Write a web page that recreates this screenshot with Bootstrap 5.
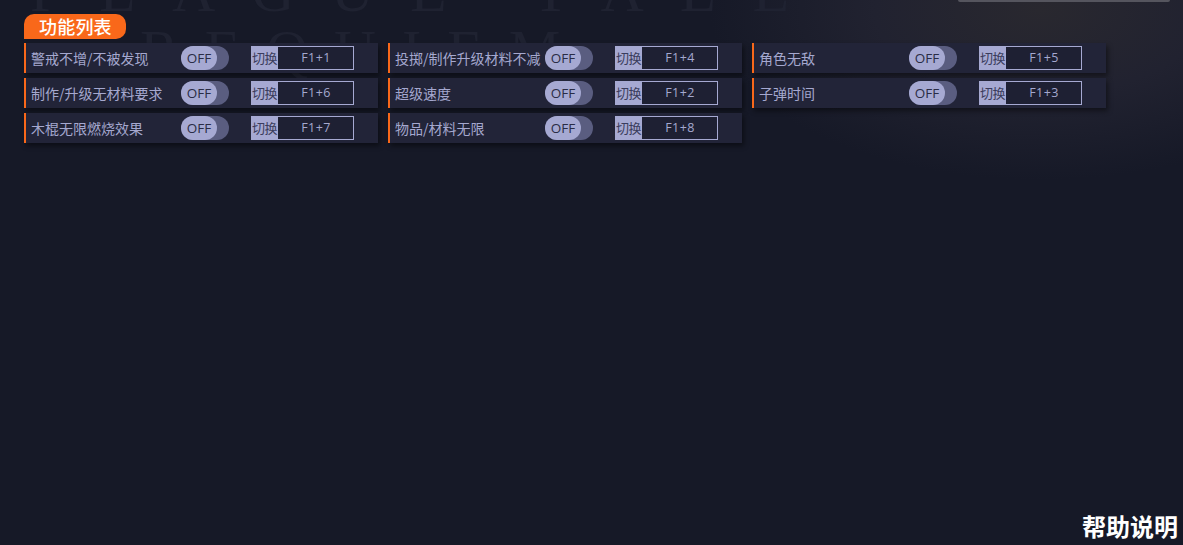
<!DOCTYPE html>
<html lang="zh">
<head>
<meta charset="utf-8">
<title>功能列表</title>
<link href="https://cdn.jsdelivr.net/npm/bootstrap@5.3.0/dist/css/bootstrap.min.css" rel="stylesheet">
<style>
html,body{height:545px;overflow:hidden}
body{background:#161927;font-family:"Noto Sans CJK SC","Open Sans",sans-serif;color:#a5a8cf;position:relative}
.stage{height:545px;padding:14px 0 0 24px;position:relative;
 background:radial-gradient(ellipse 330px 170px at 1040px 10px,#29282f 0,#212230 50%,rgba(22,25,39,0) 100%)}
.art{position:absolute;left:0;top:0;width:1183px;height:130px;pointer-events:none}
.art text{font-family:"Liberation Serif",serif;fill:#1f2231}
.scroll-edge{position:absolute;left:958px;top:0;width:212px;height:2px;border-radius:0 0 6px 6px;background:#55555e}
.head-pill{width:102px;height:25px;background:#f9681a;color:#fff;border-radius:10px 10px 10px 0;font-size:18px;font-weight:500;letter-spacing:.2px;line-height:25px;padding-left:15px;margin-bottom:4px;position:relative}
.rows{display:grid;grid-template-columns:repeat(3,354px);column-gap:10px;row-gap:5px;position:relative}
.item{height:30px;background:#222438;border-left:2px solid #f9681a;box-shadow:2px 3px 5px rgba(0,0,0,.45);display:flex;align-items:center;position:relative}
.lbl{width:155px;padding-left:5px;font-size:14px;line-height:30px;white-space:nowrap;flex:none;color:#a5a8cf}
.tgl{width:48px;height:24px;border-radius:12px;background:#5a5d80;flex:none}
.knob{width:36px;height:24px;border-radius:12px;background:#a6a9d2;color:#2a2c45;font-size:13.5px;line-height:24px;text-align:center;font-family:"Open Sans",sans-serif}
.hk{display:flex;height:24px;width:103px;margin-left:22px;border:1px solid #a6a9d2;flex:none}
.hk-a{width:27px;background:#a6a9d2;color:#3a3c5c;font-size:13px;line-height:22px;text-align:center;white-space:nowrap;flex:none;margin-left:-1px;letter-spacing:-.5px}
.hk-b{flex:1;text-align:center;font-size:12.5px;line-height:22px;color:#a5a8cf;font-family:"Open Sans",sans-serif;letter-spacing:.4px;padding-left:1px;background:#1e2033}
.help{position:absolute;right:5px;bottom:4px;color:#fff;font-size:24px;font-weight:700;line-height:30px}
</style>
</head>
<body>
<div class="stage">
<svg class="art" viewBox="0 0 1183 130" aria-hidden="true">
<text x="30" y="11" font-size="60" letter-spacing="36">PLAGUE TALE</text>
<text x="140" y="70" font-size="58" letter-spacing="26">REQUIEM</text>
</svg>
<div class="scroll-edge"></div>
<div class="head-pill">功能列表</div>
<div class="rows">
<div class="item"><div class="lbl">警戒不增/不被发现</div><div class="tgl"><div class="knob">OFF</div></div><div class="hk"><div class="hk-a">切换</div><div class="hk-b">F1+1</div></div></div>
<div class="item"><div class="lbl">投掷/制作升级材料不减</div><div class="tgl"><div class="knob">OFF</div></div><div class="hk"><div class="hk-a">切换</div><div class="hk-b">F1+4</div></div></div>
<div class="item"><div class="lbl">角色无敌</div><div class="tgl"><div class="knob">OFF</div></div><div class="hk"><div class="hk-a">切换</div><div class="hk-b">F1+5</div></div></div>
<div class="item"><div class="lbl">制作/升级无材料要求</div><div class="tgl"><div class="knob">OFF</div></div><div class="hk"><div class="hk-a">切换</div><div class="hk-b">F1+6</div></div></div>
<div class="item"><div class="lbl">超级速度</div><div class="tgl"><div class="knob">OFF</div></div><div class="hk"><div class="hk-a">切换</div><div class="hk-b">F1+2</div></div></div>
<div class="item"><div class="lbl">子弹时间</div><div class="tgl"><div class="knob">OFF</div></div><div class="hk"><div class="hk-a">切换</div><div class="hk-b">F1+3</div></div></div>
<div class="item"><div class="lbl">木棍无限燃烧效果</div><div class="tgl"><div class="knob">OFF</div></div><div class="hk"><div class="hk-a">切换</div><div class="hk-b">F1+7</div></div></div>
<div class="item"><div class="lbl">物品/材料无限</div><div class="tgl"><div class="knob">OFF</div></div><div class="hk"><div class="hk-a">切换</div><div class="hk-b">F1+8</div></div></div>
</div>
<div class="help">帮助说明</div>
</div>
<script src="https://cdn.jsdelivr.net/npm/bootstrap@5.3.0/dist/js/bootstrap.bundle.min.js"></script>
</body>
</html>
